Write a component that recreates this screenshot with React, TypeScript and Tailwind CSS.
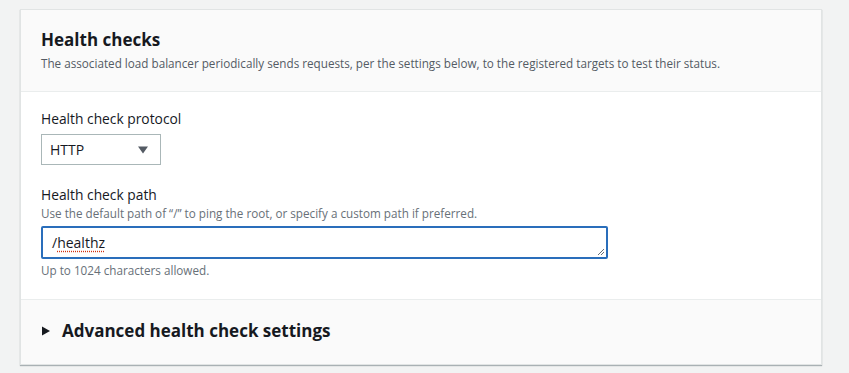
export default function App() {
  return (
    <div className="min-h-[373px] w-[849px] bg-[#f2f3f3] pt-[9px] pl-[20px] font-['Open_Sans',sans-serif] text-[#16191f]">
      <section className="w-[802px] border border-[#e1e4e4] bg-white shadow-[0_1px_1px_0_rgba(0,28,36,0.3)]">
        <div className="h-[82px] border-b border-[#eaeded] bg-[#fafafa] px-[20px] pt-[18px]">
          <h2 className="text-[17px] font-bold leading-[24px]">Health checks</h2>
          <p className="mt-[3px] text-[11.7px] leading-[16px] text-[#545b64]">
            The associated load balancer periodically sends requests, per the settings below, to the registered targets to test their status.
          </p>
        </div>
        <div className="h-[208px] border-b border-[#eaeded] px-[20px] pt-[17px]">
          <label className="block text-[13.8px] leading-[20px]">Health check protocol</label>
          <div className="mt-[5px] flex h-[31px] w-[120px] items-center justify-between border border-[#aab7b8] bg-white pl-[8px] pr-[12px]">
            <span className="text-[14px]">HTTP</span>
            <svg width="10" height="8" viewBox="0 0 10 8">
              <path d="M0 0.5h10L5 7.5z" fill="#545b64" />
            </svg>
          </div>
          <label className="mt-[20px] block text-[13.8px] leading-[20px]">Health check path</label>
          <p className="text-[11.7px] leading-[16px] text-[#687078]">
            Use the default path of “/” to ping the root, or specify a custom path if preferred.
          </p>
          <div className="relative mt-[5px] flex h-[33px] w-[567px] items-center rounded-[2px] border-2 border-[#2a6ebb] pl-[9px] text-[14px]">
            <span>
              /<span className="underline decoration-[#d13212] decoration-dotted underline-offset-[3px]">healthz</span>
            </span>
            <svg className="absolute bottom-[1px] right-[1px]" width="8" height="8" viewBox="0 0 8 8">
              <path d="M7 1L1 7M7 4L4 7" stroke="#687078" strokeWidth="1" />
            </svg>
          </div>
          <p className="mt-[3px] text-[11.7px] leading-[16px] text-[#687078]">Up to 1024 characters allowed.</p>
        </div>
        <div className="flex h-[64px] items-center bg-[#fafafa] px-[20px] pb-[2px]">
          <svg width="9" height="10" viewBox="0 0 9 10" className="ml-[1px]">
            <path d="M0 0.5L8 5L0 9.5z" fill="#16191f" />
          </svg>
          <span className="ml-[11px] text-[17px] font-bold leading-[24px]">Advanced health check settings</span>
        </div>
      </section>
    </div>
  );
}
